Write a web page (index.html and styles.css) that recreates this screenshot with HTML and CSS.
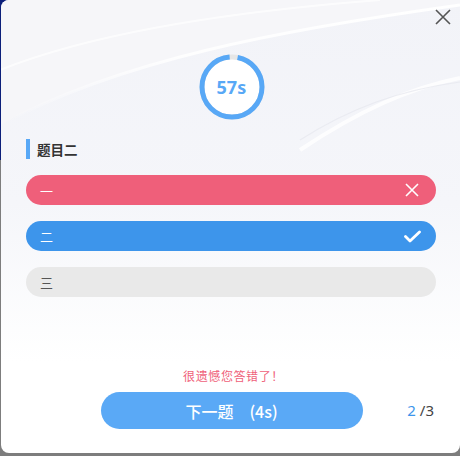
FILE: index.html
```html
<!DOCTYPE html>
<html lang="zh">
<head>
<meta charset="utf-8">
<link rel="stylesheet" href="styles.css">
</head>
<body>
<div class="stage">
  <div class="dialog">
    <svg class="bg" width="460" height="453" viewBox="0 0 460 453">
      <defs>
        <linearGradient id="sw" x1="0" y1="0" x2="1" y2="0">
          <stop offset="0" stop-color="#ffffff" stop-opacity="0"/>
          <stop offset="0.4" stop-color="#ffffff" stop-opacity="0.9"/>
          <stop offset="1" stop-color="#ffffff" stop-opacity="1"/>
        </linearGradient>
      </defs>
      <path d="M0 125 C 120 60, 280 30, 460 5 L460 0 L0 0 Z" fill="#f6f6f9"/>
      <path d="M0 125 C 120 60, 280 30, 460 5" fill="none" stroke="url(#sw)" stroke-width="3"/>
      <path d="M0 70 C 100 30, 250 10, 380 0" fill="none" stroke="#ffffff" stroke-opacity="0.7" stroke-width="2"/>
      <path d="M300 150 C 360 110, 410 88, 460 78" fill="none" stroke="#ffffff" stroke-opacity="0.8" stroke-width="4"/>
      <path d="M300 140 C 350 108, 400 90, 460 82" fill="none" stroke="#e6e7ee" stroke-opacity="0.7" stroke-width="1.2"/>
    </svg>
    <button class="close" aria-label="close">
      <svg width="16" height="16" viewBox="0 0 16 16"><path d="M1 1 L15 15 M15 1 L1 15" stroke="#555" stroke-width="1.6" fill="none"/></svg>
    </button>
    <div class="timer">
      <svg class="ring" width="66" height="66" viewBox="0 0 66 66">
        <circle cx="33" cy="33" r="30" fill="#ffffff" stroke="#e6e6e6" stroke-width="5"/>
        <circle cx="33" cy="33" r="30" fill="none" stroke="#58a8f6" stroke-width="5" stroke-dasharray="180.2 8.3" stroke-dashoffset="-5.6" transform="rotate(-90 33 33)"/>
      </svg>
      <span class="timer-text">57s</span>
    </div>
    <div class="question">
      <div class="q-title">题目二</div>
      <div class="options">
        <div class="opt wrong"><span>一</span>
          <svg width="14" height="14" viewBox="0 0 14 14"><path d="M1 1 L13 13 M13 1 L1 13" stroke="#fff" stroke-width="1.6" fill="none"/></svg>
        </div>
        <div class="opt right"><span>二</span>
          <svg width="17" height="13" viewBox="0 0 17 13"><path d="M1.5 6.5 L6 11 L15.5 2" stroke="#fff" stroke-width="2.8" fill="none" stroke-linecap="round" stroke-linejoin="round"/></svg>
        </div>
        <div class="opt plain"><span>三</span></div>
      </div>
    </div>
    <div class="footer">
      <div class="msg">很遗憾您答错了！</div>
      <div class="actions">
        <button class="next">下一题　(4s)</button>
        <div class="pager"><span class="cur">2</span> /3</div>
      </div>
    </div>
  </div>
</div>
</body>
</html>
```
FILE: styles.css
```css
* { box-sizing: border-box; }
html, body { margin: 0; padding: 0; }
body {
  width: 460px; height: 456px; overflow: hidden;
  background: #808080;
  font-family: "Noto Sans CJK SC", "Noto Sans", sans-serif;
}
.stage {
  width: 460px; height: 456px;
  background: linear-gradient(to bottom, #0c1f7a 0, #0c1f7a 160px, #7d7d7d 160px);
  padding: 0 0 3px 1px;
}
.dialog {
  position: relative;
  width: 459px; height: 453px;
  border-radius: 8px 0 8px 8px;
  background: linear-gradient(to bottom, #f2f3f8 0%, #f5f6fa 45%, #ffffff 80%);
  overflow: hidden;
  display: flex; flex-direction: column; align-items: center;
}
.bg { position: absolute; left: -1px; top: 0; pointer-events: none; }
.close {
  position: absolute; right: 9px; top: 9px;
  border: 0; background: none; padding: 0; width: 16px; height: 16px;
  display: flex;
}
.timer {
  position: relative;
  margin-top: 54px;
  margin-left: 2px;
  width: 66px; height: 66px;
  display: flex; align-items: center; justify-content: center;
}
.ring { position: absolute; left: 0; top: 0; }
.timer-text {
  position: relative;
  color: #58a8f6; font-weight: 700; font-size: 18px;
  font-family: "Noto Sans", "Open Sans", sans-serif;
  letter-spacing: 0.2px;
}
.question { width: 100%; padding: 0 24px 0 25px; margin-top: 19px; }
.q-title {
  border-left: 4px solid #58a8f6;
  padding-left: 7px;
  height: 20px; line-height: 20px;
  font-size: 13.5px; font-weight: 700; color: #333;
}
.options { display: flex; flex-direction: column; gap: 16px; margin-top: 16px; }
.opt {
  height: 30px; border-radius: 15px;
  display: flex; align-items: center; justify-content: space-between;
  padding: 0 17px 0 14px;
  font-size: 13px;
}
.opt.wrong { background: #ef5f7a; color: #fff; }
.opt.right { background: #3d95eb; color: #fff; padding-right: 15px; }
.opt.plain { background: #e9e9e9; color: #555; }
.footer {
  margin-top: auto; margin-bottom: 24px;
  width: 100%;
  display: flex; flex-direction: column; align-items: center;
}
.msg { color: #ef5f7a; font-size: 12px; line-height: 16px; letter-spacing: 0.6px; margin-left: 6px; }
.actions {
  position: relative;
  width: 100%; margin-top: 8px;
  display: flex; justify-content: center;
}
.next {
  width: 262px; height: 37px; border-radius: 19px;
  border: 0; background: #5aa9f6; color: #fff;
  font-family: "Noto Sans CJK SC", sans-serif;
  font-size: 16px; font-weight: 500; margin-left: 2px;
}
.pager {
  position: absolute; right: 26px; top: 8px;
  font-size: 15px; color: #444;
  font-family: "Noto Sans", sans-serif;
}
.pager .cur { color: #3d95eb; }
```
